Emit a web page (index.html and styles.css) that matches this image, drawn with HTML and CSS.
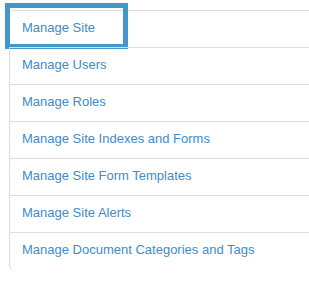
FILE: index.html
```html
<!DOCTYPE html>
<html lang="en">
<head>
    <meta charset="UTF-8">
    <title>Site Admin</title>
    <link rel="stylesheet" href="styles.css">
</head>
<body>
    <div class="list-group">
        <a href="#" class="list-item focused">Manage Site</a>
        <a href="#" class="list-item">Manage Users</a>
        <a href="#" class="list-item">Manage Roles</a>
        <a href="#" class="list-item">Manage Site Indexes and Forms</a>
        <a href="#" class="list-item">Manage Site Form Templates</a>
        <a href="#" class="list-item">Manage Site Alerts</a>
        <a href="#" class="list-item">Manage Document Categories and Tags</a>
    </div>
</body>
</html>
```

FILE: styles.css
```css
body {
    font-family: "Liberation Sans", Arial, sans-serif;
    background-color: #ffffff;
    margin: 0;
    padding: 10px 0 0 9px;
    overflow: hidden;
}

.list-group {
    width: 320px;
    display: flex;
    flex-direction: column;
}

.list-item {
    position: relative;
    display: block;
    padding: 9px 12px 11px 12px;
    font-size: 13px;
    line-height: 16px;
    color: #428bca;
    text-decoration: none;
    border: 1px solid #dddddd;
    margin-bottom: -1px;
}

.list-item:first-child {
    border-top-left-radius: 4px;
    border-top-right-radius: 4px;
}

.list-item:last-child {
    border-bottom-left-radius: 4px;
    border-bottom-right-radius: 4px;
}

/* focus ring drawn over the first item */
.list-item.focused::after {
    content: "";
    position: absolute;
    left: -5px;
    top: -8px;
    width: 113px;
    height: 36px;
    border: 5px solid #4596cb;
}
```
